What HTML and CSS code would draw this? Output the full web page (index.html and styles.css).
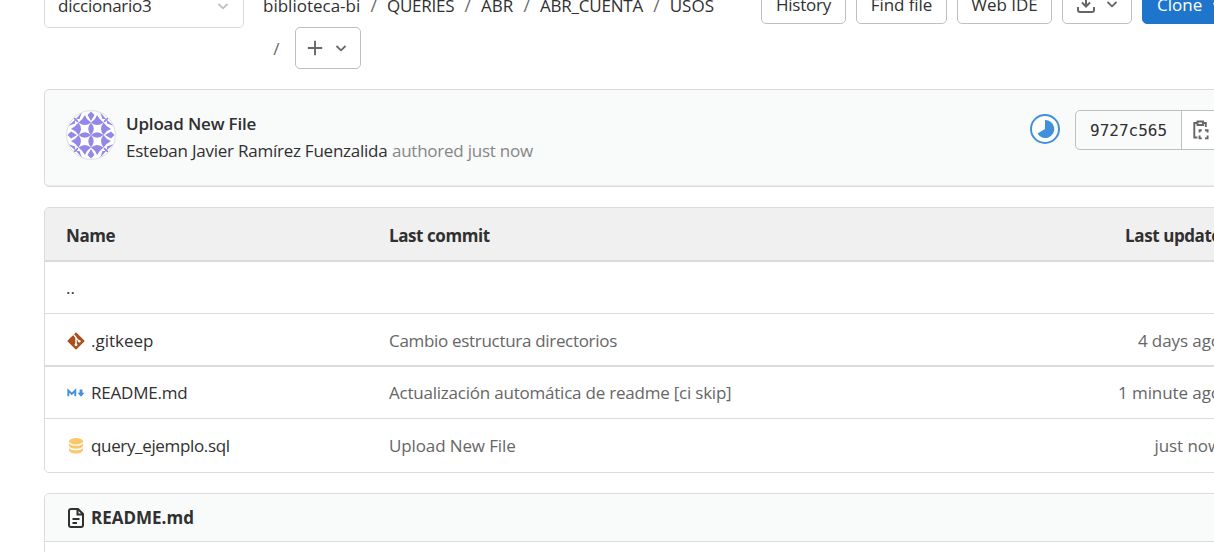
FILE: index.html
```html
<!DOCTYPE html>
<html lang="es">
<head>
<meta charset="utf-8">
<title>USOS · biblioteca-bi</title>
<link rel="stylesheet" href="styles.css">
</head>
<body>
<main class="page">
  <div class="toolbar">
    <div class="branch"><span class="t-branch">diccionario3</span>
      <svg class="chev light" viewBox="0 0 16 16"><path d="M3.5 6 8 10.3 12.500 6"/></svg>
    </div>
    <nav class="crumbs">
      <div class="crumb-row"><span>biblioteca-bi</span><i>/</i><span class="c2">QUERIES</span><i>/</i><span>ABR</span><i>/</i><span class="c4">ABR_CUENTA</span><i>/</i><span>USOS</span></div>
      <div class="crumb-row second"><i>/</i>
        <button class="btn add"><svg class="plus" viewBox="0 0 16 16"><path d="M8 .8v14.400M.8 8h14.400"/></svg><svg class="chev" viewBox="0 0 16 16"><path d="M3.500 6 8 10.300 12.500 6"/></svg></button>
      </div>
    </nav>
    <div class="actions">
      <button class="btn b-history"><span>History</span></button>
      <button class="btn b-find"><span>Find file</span></button>
      <button class="btn b-ide"><span>Web IDE</span></button>
      <button class="btn b-down"><svg class="download" viewBox="0 0 20 20"><path d="M10 2v10M6 8.500l4 4 4-4M2 13v3q0 2 2 2h12q2 0 2-2v-3"/></svg><svg class="chev" viewBox="0 0 16 16"><path d="M3.500 6 8 10.300 12.500 6"/></svg></button>
      <button class="btn b-clone"><span>Clone</span><svg class="chev" viewBox="0 0 16 16"><path d="M3.500 6 8 10.300 12.500 6"/></svg></button>
    </div>
  </div>

  <section class="commit">
    <svg class="avatar" viewBox="0 0 50 50">
      <defs>
        <clipPath id="round"><circle cx="25" cy="25" r="24.200"/></clipPath>
        <g id="quarter" fill="#9488e6">
          <path d="M25 25Q19.500 19 25 12.500V25ZM25 25Q19 19.500 12.500 25H25Z"/>
          <path d="M12.500 12.500Q19 17.500 25 12.500L21 9 19 5Q17 9 12.500 12.500Z"/>
          <path d="M12.500 12.500Q17.500 19 12.500 25L9 21 5 19Q9 17 12.500 12.500Z"/>
          <path d="M25 11 21.500 5 25 1.500ZM11 25 5 21.500 1.500 25Z"/>
          <path d="M12.500 12.500Q9 12 7 7 12 9 12.500 12.500ZM10 9 16 2 13.500 9ZM9 10 2 16 9 13.500Z"/>
        </g>
      </defs>
      <g clip-path="url(#round)">
        <path d="M0 0h50v50H0z" fill="#fff"/>
        <use href="#quarter"/>
        <use href="#quarter" transform="rotate(90 25 25)"/>
        <use href="#quarter" transform="rotate(180 25 25)"/>
        <use href="#quarter" transform="rotate(270 25 25)"/>
      </g>
      <circle cx="25" cy="25" r="24.400" fill="none" stroke="#dedee2"/>
    </svg>
    <div class="commit-text">
      <strong class="t-title">Upload New File</strong>
      <div><span class="t-author">Esteban Javier Ramírez Fuenzalida</span> <span class="t-when">authored just now</span></div>
    </div>
    <svg class="status" viewBox="0 0 30 30"><circle cx="15" cy="15" r="14" fill="#fff" stroke="#428fdc" stroke-width="2"/><path d="M15 6a9 9 0 1 1-7.500 13.500L15 15Z" fill="#428fdc"/></svg>
    <div class="sha"><code>9727c565</code>
      <span class="copy"><svg viewBox="0 0 16 20"><path d="M4 3H1.300v14.500H4.500M11 3h1.800v4M4.500 1.500h5.500v3.500H4.500z"/><path d="M6.600 12.500v-2.200h2.200M12 10.300h2.600v2.200M14.600 15.500v2.900H12M8.800 18.400H6.600v-2.900"/></svg></span>
    </div>
  </section>

  <section class="files">
    <div class="row head"><b>Name</b><b>Last commit</b><b class="time">Last update</b></div>
    <div class="row up"><span>..</span></div>
    <div class="row git"><span class="file"><svg viewBox="0 0 18 18"><path d="M9 1.200 16.800 9 9 16.800 1.200 9Z" fill="#a9501f" stroke="#a9501f" stroke-width="1.500" stroke-linejoin="round"/><path d="M6.500 2.500 9 5.500V13M9 6l3.500 3.500" fill="none" stroke="#fff" stroke-width="1.400"/><circle cx="9" cy="12.800" r="1.400" fill="#fff"/><circle cx="12.300" cy="9.300" r="1.300" fill="#fff"/></svg><span>.gitkeep</span></span><span class="m m1">Cambio estructura directorios</span><span class="time m">4 days ago</span></div>
    <div class="row md"><span class="file"><svg viewBox="0 0 18 18"><path d="M1.300 12.300V6.500L4.800 10l3.500-3.500v5.800" fill="none" stroke="#428fdc" stroke-width="1.900"/><path d="M12.600 5.500h2.800v3.300h2.200L14 12.800l-3.600-4h2.200Z" fill="#428fdc"/></svg><span class="f2">README.md</span></span><span class="m m2">Actualización automática de readme [ci skip]</span><span class="time m">1 minute ago</span></div>
    <div class="row sql"><span class="file"><svg viewBox="0 0 18 18"><g fill="#fcc66a"><ellipse cx="9" cy="4.300" rx="7" ry="3.200"/><path d="M2 6.500q2 2.300 7 2.300t7-2.300v2.200q-1 3-7 3T2 8.700ZM2 11q2 2.300 7 2.300t7-2.300v2.200q-1 3.200-7 3.200t-7-3.200Z"/></g></svg><span class="f3">query_ejemplo.sql</span></span><span class="m m3">Upload New File</span><span class="time m">just now</span></div>
  </section>

  <section class="readme">
    <div class="readme-head"><svg viewBox="0 0 16 20"><path d="M3 1h7l5 5v11q0 2-2 2H3q-2 0-2-2V3q0-2 2-2ZM9.500 1v5.500H15M4.500 11h7M4.500 15h4.500"/></svg><b>README.md</b></div>
  </section>
</main>
</body>
</html>
```
FILE: styles.css
```css
* { box-sizing: border-box; }
body { margin: 0; background: #fff; color: #303030; font: 17px/27px "Open Sans", "Noto Sans", sans-serif; }
.page { height: 552px; overflow: hidden; padding-left: 44px; }
.page > * { width: 1190px; }
span, b, strong, i { white-space: nowrap; }
svg { flex: none; display: block; }
i { font-style: normal; color: #666; }
.toolbar { display: flex; align-items: flex-start; margin-top: -18px; height: 107px; }
.toolbar > * { flex-shrink: 0; }
.branch { width: 200px; height: 42px; margin-top: 4px; border: 1px solid #dbdbdb; border-radius: 5px; display: flex; align-items: center; justify-content: space-between; padding: 0 12px 3px 13px; }
.t-branch { letter-spacing: -.25px; }
.chev { width: 16px; height: 16px; fill: none; stroke: #666; stroke-width: 1.800; }
.chev.light { stroke: #bfbfbf; }
.crumbs { width: 498px; padding-left: 19px; }
.crumb-row { display: flex; align-items: center; height: 42px; margin-top: 3px; padding-bottom: 2px; }
.crumb-row i { width: 26.700px; text-align: center; }
.crumb-row.second { margin-top: 0; padding-bottom: 0; }
.c2 { letter-spacing: -.25px; }
.c4 { letter-spacing: -.2px; }
.btn { height: 42px; border: 1px solid #bfbfbf; border-radius: 5px; background: #fff; color: #303030; font: inherit; display: flex; align-items: center; justify-content: center; padding: 0; }
.add { width: 66px; gap: 10px; margin-left: 5.300px; }
.plus { width: 16px; height: 16px; stroke: #666; stroke-width: 1.900; }
.actions { display: flex; gap: 10px; margin-left: 19px; }
.b-history { width: 85px; padding-top: 3px; letter-spacing: -.25px; }
.b-find { width: 91px; padding-top: 3px; letter-spacing: -.1px; }
.b-ide { width: 95px; padding-top: 3px; }
.b-down { width: 70px; gap: 8px; padding: 2px 0 0 2px; }
.download { width: 20px; height: 20px; fill: none; stroke: #666; stroke-width: 2; }
.b-clone { width: 99px; background: #1f75cb; border-color: #1f75cb; color: #fff; justify-content: flex-start; padding: 3px 0 0 14px; gap: 8px; }
.b-clone .chev { stroke: #fff; }
.commit { height: 98px; border: 1px solid #dbdbdb; border-radius: 5px; background: #f9fafa; box-shadow: inset 0 -2px 0 -1px #ececec; display: flex; padding: 20px 0 0 21px; }
.avatar { width: 50px; height: 50px; margin-right: 10px; }
.commit-text { width: 904px; }
.t-title { font-weight: 600; display: block; letter-spacing: -.18px; }
.t-author, .t-when { letter-spacing: -.24px; }
.t-when { color: #868686; }
.status { width: 30px; height: 30px; margin-top: 4px; }
.sha { display: flex; height: 40px; width: 150px; margin-left: 15px; border: 1px solid #bfbfbf; border-radius: 5px; }
.sha code { width: 106px; border-right: 1px solid #bfbfbf; font: 16px/39px "DejaVu Sans Mono", monospace; padding-left: 14px; }
.copy { background: #fff; flex: 1; padding: 9px 0 0 11px; }
.copy svg { width: 16px; height: 20px; fill: none; stroke: #666; stroke-width: 1.900; }
.files { margin-top: 20px; border: 1px solid #dbdbdb; border-radius: 5px; overflow: hidden; }
.row { display: grid; grid-template-columns: 323px 726px 106px; padding-left: 21px; align-items: center; border-bottom: 1px solid #dbdbdb; height: 52px; }
.head { height: 54px; background: #f0f0f0; border-bottom-width: 2px; padding-top: 3px; letter-spacing: -.42px; }
.time { text-align: right; }
.m.time { letter-spacing: -.08px; }
.git { height: 53px; border-bottom-width: 2px; padding-top: 2px; }
.sql { height: 53px; border-bottom: 0; }
.file { display: flex; align-items: center; gap: 6px; padding-left: 1px; }
.file svg { width: 18px; height: 18px; }
.m { color: #666; }
.m1 { letter-spacing: -.31px; }
.m2 { letter-spacing: -.22px; }
.m3 { letter-spacing: -.12px; }
.f2 { letter-spacing: -.2px; }
.f3 { letter-spacing: -.35px; }
.readme { margin-top: 20px; height: 90px; border: 1px solid #dbdbdb; border-radius: 5px; overflow: hidden; }
.readme-head { height: 48px; background: #f9fafa; border-bottom: 1px solid #dbdbdb; display: flex; align-items: center; gap: 7px; padding-left: 23px; }
.readme-head svg { width: 16px; height: 20px; fill: none; stroke: #303030; stroke-width: 2; }
```
